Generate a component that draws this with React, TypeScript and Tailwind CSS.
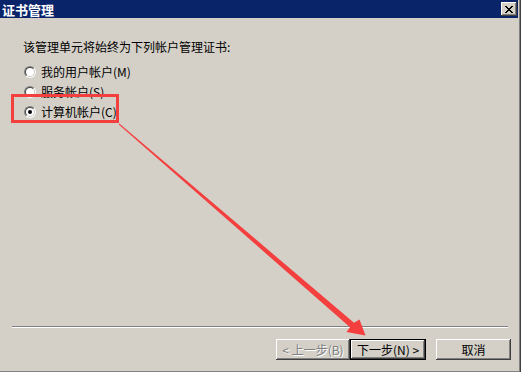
import React from 'react';

const font = { fontFamily: '"Noto Sans CJK SC", "Noto Sans", sans-serif' };

// classic raised 3d edge
const raised =
  'bg-[#d4d0c8] shadow-[inset_-1px_-1px_0_#404040,inset_1px_1px_0_#ffffff,inset_-2px_-2px_0_#808080]';

function Radio({ checked }: { checked?: boolean }) {
  return (
    <span className="flex h-[12px] w-[12px] shrink-0 items-center justify-center rounded-full border border-t-[#808080] border-l-[#808080] border-b-white border-r-white">
      <span className="flex h-[10px] w-[10px] items-center justify-center rounded-full border border-t-[#404040] border-l-[#404040] border-b-[#d4d0c8] border-r-[#d4d0c8] bg-white">
        {checked && <span className="h-[4px] w-[4px] rounded-full bg-black" />}
      </span>
    </span>
  );
}

function Option({ label, checked }: { label: string; checked?: boolean }) {
  return (
    <label className="flex h-[12px] items-center gap-[5px] text-[12px] leading-[12px] text-black">
      <Radio checked={checked} />
      <span>{label}</span>
    </label>
  );
}

function CloseGlyph() {
  const rows = ['11000011', '01100110', '00111100', '00011000', '00111100', '01100110', '11000011'];
  return (
    <svg width="8" height="7" viewBox="0 0 8 7" shapeRendering="crispEdges">
      {rows.flatMap((r, y) =>
        r.split('').map((c, x) => (c === '1' ? <rect key={`${x}-${y}`} x={x} y={y} width="1" height="1" fill="#000" /> : null))
      )}
    </svg>
  );
}

export default function App() {
  return (
    <div className="relative h-[372px] w-[521px] overflow-hidden border-r border-r-[#404040] bg-[#d4d0c8]" style={font}>
      <div className="flex h-full flex-col border-r border-b border-[#808080]">
        {/* title bar */}
        <div className="mr-[1px] flex h-[18px] items-center justify-between bg-[#0a246a] pr-[1px] pl-[2px]">
          <span className="text-[13px] leading-[13px] font-bold text-white">证书管理</span>
          <button className={`flex h-[14px] w-[16px] items-center justify-center ${raised}`}>
            <CloseGlyph />
          </button>
        </div>

        {/* body */}
        <div className="flex-1 pt-[23px]">
          <p className="pl-[23px] text-[12px] leading-[12px] text-black">该管理单元将始终为下列帐户管理证书:</p>
          <div className="mt-[13px] flex flex-col gap-[8px] pl-[24px]">
            <Option label="我的用户帐户(M)" />
            <Option label="服务帐户(S)" />
            <Option label="计算机帐户(C)" checked />
          </div>
        </div>

        {/* footer */}
        <div className="pb-[11px]">
          <div className="ml-[12px] w-[496px] border-t border-b border-t-[#808080] border-b-white" />
          <div className="mt-[11px] flex justify-end pr-[8px] text-[12px] leading-[12px]">
            <button className={`flex h-[21px] w-[74px] items-center justify-center text-[#808080] [text-shadow:1px_1px_0_#ffffff] ${raised}`}>
              &lt; 上一步(B)
            </button>
            <button className="h-[21px] w-[76px] border border-black">
              <span className={`flex h-full w-full items-center justify-center text-black ${raised}`}>下一步(N) &gt;</span>
            </button>
            <button className={`ml-[10px] flex h-[21px] w-[75px] items-center justify-center text-black ${raised}`}>
              取消
            </button>
          </div>
        </div>
      </div>

      {/* annotation: red box */}
      <div className="pointer-events-none absolute top-[94px] left-[11px] h-[29px] w-[108px] border-[3px] border-[#f43f3f]" />

      {/* annotation: arrow */}
      <svg className="pointer-events-none absolute top-0 left-0" width="521" height="372" viewBox="0 0 521 372">
        <polygon
          points="119.3,123.6 354,322.7 359.5,319.5 365.5,335.5 346.5,332 350,327.3 118.7,124.4"
          fill="#f43f3f"
        />
      </svg>
    </div>
  );
}
